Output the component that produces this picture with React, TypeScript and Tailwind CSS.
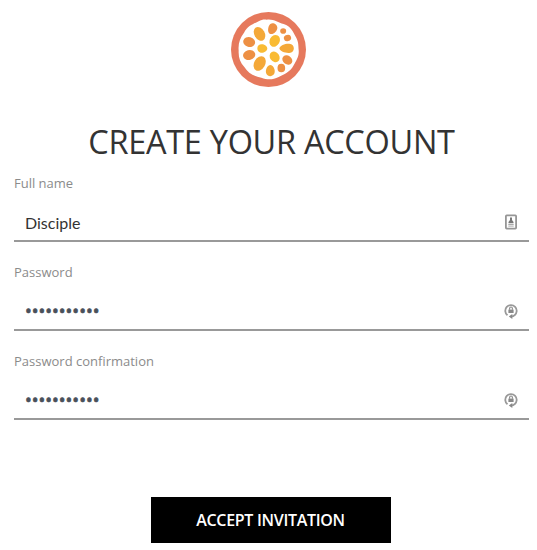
import type { ReactNode } from 'react';

function Logo() {
  return (
    <svg className="block h-[75px] w-[75px]" viewBox="15 18 225 225">
      <circle cx="127.5" cy="130.5" r="112.5" fill="#e6795d" />
      <path
        d="M122 41C143 38 155 50 173 54C195 60 201 78 210 94C218 108 217 120 218 132C220 151 211 163 203 178C192 199 174 205 158 213C140 222 124 222 106 215C83 211 66 201 55 183C42 169 37 154 38 134C36 112 42 96 54 80C66 59 82 54 98 46C106 41 114 40 122 41Z"
        fill="#fff"
      />
      <g fill="#f4a838">
        <ellipse cx="100.5" cy="83.5" rx="15.5" ry="22" transform="rotate(-30 100.5 83.5)" />
        <path d="M160 127C162 118 178 112 190 113C208 114 208 140 190 141C178 142 162 136 160 127Z" />
        <ellipse cx="101" cy="172.5" rx="16.5" ry="23" transform="rotate(30 101 172.5)" />
        <path d="M133 177C141 178 148 189 146 199C144 214 123 214 120 200C118 189 125 177 133 177Z" />
      </g>
      <g fill="#ed9044">
        <path d="M131 83C124 79 125 61 133 54C141 48 154 55 154 66C154 76 140 88 131 83Z" />
        <ellipse cx="69.5" cy="108" rx="18" ry="15" transform="rotate(15 69.5 108)" />
        <ellipse cx="69.5" cy="147" rx="18.5" ry="15" transform="rotate(-15 69.5 147)" />
        <ellipse cx="184" cy="162" rx="16" ry="13" transform="rotate(35 184 162)" />
        <ellipse cx="166" cy="186" rx="11.5" ry="13" />
        <ellipse cx="184.5" cy="96" rx="11" ry="9.5" transform="rotate(-15 184.5 96)" />
        <ellipse cx="171.5" cy="75" rx="9" ry="8.5" />
      </g>
      <g fill="#f9bb33">
        <ellipse cx="146" cy="104.5" rx="15" ry="18.5" transform="rotate(30 146 104.5)" />
        <path d="M94 127C94 116 103 113 111 115C119 117 124 123 124 128C123 135 113 142 104 140C97 138 94 133 94 127Z" />
        <ellipse cx="146" cy="152.5" rx="14" ry="17" transform="rotate(-35 146 152.5)" />
      </g>
    </svg>
  );
}

function ContactIcon() {
  return (
    <svg className="block h-4 w-4" viewBox="0 0 16 16" fill="none">
      <rect x="2.9" y="1.4" width="10.2" height="13.2" rx="0.8" stroke="#969696" strokeWidth="1.8" />
      <path d="M7 3.5H9V6L10.5 8V9.2H5.5V8L7 6Z" fill="#777" />
      <path d="M5.3 10.5H10.7M5.3 12.1H10.7" stroke="#aaa" />
    </svg>
  );
}

function PasswordIcon() {
  return (
    <svg className="block h-4 w-4" viewBox="0 0 16 16" fill="none">
      <path d="M4.5 12.3A5.7 5.7 0 1 1 11.6 12.2Q10.5 13.4 8.4 13.5" stroke="#999" strokeWidth="1.8" />
      <path d="M9.3 11V16L5.8 13.5Z" fill="#888" />
      <rect x="5.4" y="6.6" width="5.2" height="3.4" fill="#888" />
      <path d="M6.6 6.8V5.4A1.4 1.4 0 0 1 9.4 5.4V6.8" stroke="#888" strokeWidth="1.1" />
    </svg>
  );
}

type FieldProps = {
  label: string;
  type?: string;
  value: string;
  inputClass: string;
  icon: ReactNode;
};

function Field({ label, type = 'text', value, inputClass, icon }: FieldProps) {
  return (
    <label className="flex h-[89px] flex-col">
      <span className="h-[31px] text-[13px] leading-5 text-[#8b8b8b]">{label}</span>
      <span className="flex h-[38px] items-center border-b-2 border-[#999] pr-[10px] pl-[11px]">
        <input
          type={type}
          defaultValue={value}
          className={`h-9 min-w-0 flex-1 bg-transparent outline-none ${inputClass}`}
        />
        {icon}
      </span>
    </label>
  );
}

export default function App() {
  return (
    <main className="flex h-[550px] w-[537px] flex-col bg-white pt-3 pr-2 pl-[14px] font-['Open_Sans',sans-serif]">
      <div className="flex justify-center pr-[6px]">
        <Logo />
      </div>
      <h1 className="mt-[31px] text-center text-[32.5px] leading-[48px] tracking-[-0.3px] whitespace-nowrap text-[#333]">
        CREATE YOUR ACCOUNT
      </h1>
      <form className="mt-[7px] flex flex-col">
        <Field
          label="Full name"
          value="Disciple"
          inputClass="font-['Lato',sans-serif] text-[16px] text-[#333]"
          icon={<ContactIcon />}
        />
        <Field
          label="Password"
          type="password"
          value="disciple123"
          inputClass="text-[18px] text-[#49505a] [-webkit-text-stroke:0.7px_#49505a]"
          icon={<PasswordIcon />}
        />
        <Field
          label="Password confirmation"
          type="password"
          value="disciple123"
          inputClass="text-[18px] text-[#49505a] [-webkit-text-stroke:0.7px_#49505a]"
          icon={<PasswordIcon />}
        />
        <button
          type="button"
          className="mt-[57px] mr-[2px] h-[46px] w-60 self-center bg-black text-[16px] font-semibold tracking-[-0.3px] text-white"
        >
          ACCEPT INVITATION
        </button>
      </form>
    </main>
  );
}
